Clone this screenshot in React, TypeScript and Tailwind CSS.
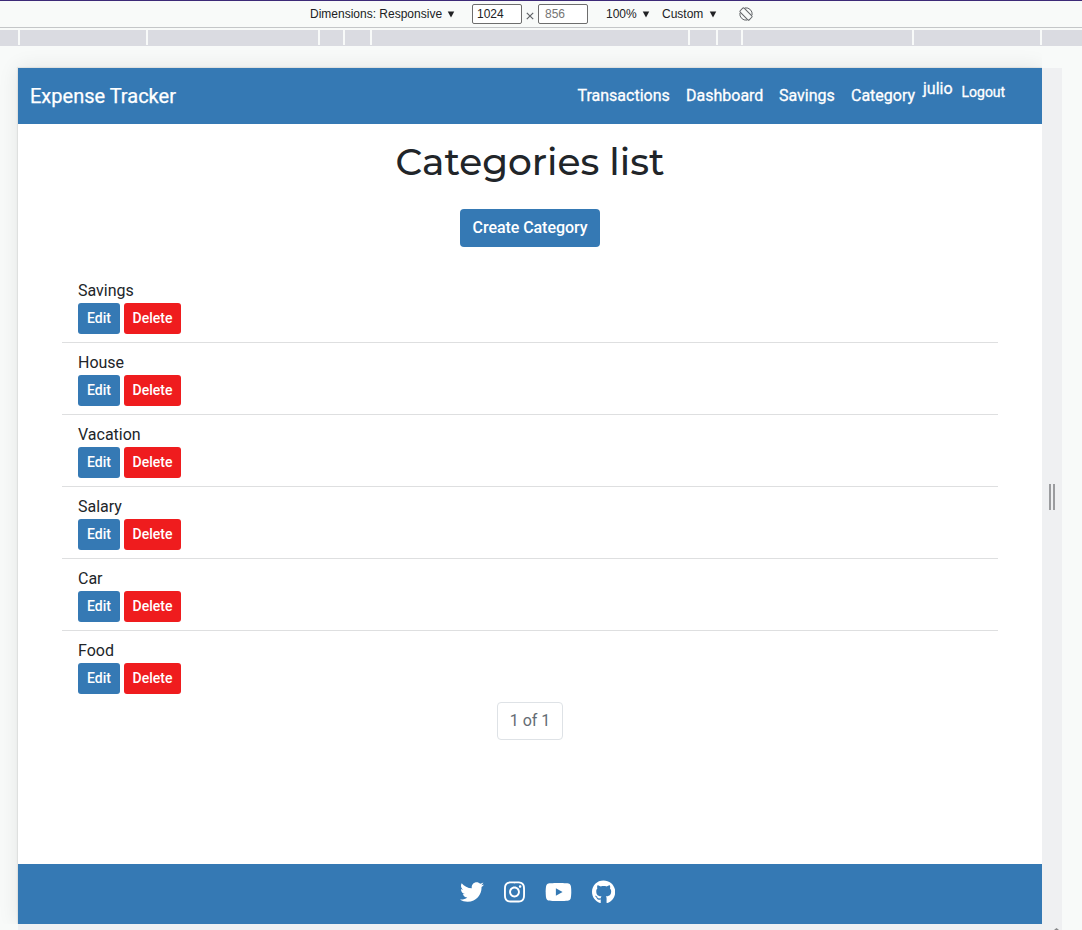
import { FaTwitter, FaInstagram, FaYoutube, FaGithub } from "react-icons/fa";

const categories = ["Savings", "House", "Vacation", "Salary", "Car", "Food"];

function DeviceToolbar() {
  return (
    <div className="flex h-7 shrink-0 items-center border-t border-b border-t-[#3d2a78] border-b-[#c4c6c8] bg-[#f8faf9] pl-[310px] font-['Liberation_Sans',Arial,sans-serif] text-[12px] leading-[14px] text-[#202124]">
      <span className="w-[134px] whitespace-nowrap">Dimensions: Responsive</span>
      <Caret />
      <span className="ml-[17px] flex h-5 w-[50px] items-center rounded-[2px] border border-[#6d6d6d] bg-white pl-1">1024</span>
      <svg viewBox="0 0 8 8" className="mx-1 mt-1 size-2 stroke-[#606367]" strokeWidth="1.2"><path d="M.8.8l6.4 6.4M7.2.8L.8 7.2" /></svg>
      <span className="flex h-5 w-[50px] items-center rounded-[2px] border border-[#6d6d6d] bg-white pl-1.5 text-[#757575]">856</span>
      <span className="ml-[18px] w-[33px]">100%</span>
      <Caret />
      <span className="ml-[12px] w-[44px]">Custom</span>
      <Caret />
      <svg viewBox="0 0 16 16" className="ml-[21px] size-4 fill-none stroke-[#606367]" strokeWidth="1">
        <rect x="5.2" y="1.6" width="5.6" height="12.8" rx="1" transform="rotate(-45 8 8)" />
        <path d="M7 1.9A6.2 6.2 0 0 1 14.1 9M9 14.1A6.2 6.2 0 0 1 1.9 7" />
      </svg>
    </div>
  );
}

function Caret() {
  return <svg viewBox="0 0 8 8" className="ml-[3px] h-[7px] w-[8px] fill-[#202124]"><path d="M.3.5h7.4L4 7.5z" /></svg>;
}

function Ruler() {
  return (
    <div className="mt-0.5 grid h-4 shrink-0 grid-cols-[18px_126px_170px_23px_25px_316px_26px_23px_169px_126px_1fr] gap-x-[2px] border-b border-[#dadbe1] bg-[#f8faf9]">
      {Array.from({ length: 11 }, (_, i) => <span key={i} className="bg-[#dadbe1]" />)}
    </div>
  );
}

function Navbar() {
  return (
    <nav className="flex h-14 shrink-0 bg-[#3579b4] px-3 text-white">
      <a className="mt-[13px] text-[20px] leading-[30px] [-webkit-text-stroke:0.25px_white]">Expense Tracker</a>
      <div className="mr-[24.5px] ml-auto flex text-[16px] leading-6 [-webkit-text-stroke:0.3px_white]">
        <a className="mt-[15.5px] w-[108.5px]">Transactions</a>
        <a className="mt-[15.5px] w-[93px]">Dashboard</a>
        <a className="mt-[15.5px] w-[72px]">Savings</a>
        <a className="mt-[15.5px] w-[72px]">Category</a>
        <span className="mt-[8.5px] w-[38.5px]">julio</span>
        <a className="mt-[13.5px] w-[44px] text-[14px] leading-[21px]">Logout</a>
      </div>
    </nav>
  );
}

function CategoryRow({ name }: { name: string }) {
  return (
    <li className="h-[72px] border-b border-[#dedfe0] px-4 pt-2 last:border-b-0">
      <p className="text-[16px] leading-6">{name}</p>
      <div className="flex gap-1 text-[14px] leading-[21px] font-medium text-white">
        <button className="h-[31px] w-[42px] rounded-[3px] bg-[#3579b4]">Edit</button>
        <button className="h-[31px] w-[57px] rounded-[3px] bg-[#ef1c1e]">Delete</button>
      </div>
    </li>
  );
}

export default function App() {
  return (
    <div className="flex h-[930px] w-[1082px] flex-col overflow-hidden bg-[#f8faf9] font-[Roboto,sans-serif] text-[#212529]">
      <DeviceToolbar />
      <Ruler />
      <div className="mt-[22px] ml-[18px] grid w-[1044px] grid-cols-[1024px_20px] grid-rows-[856px_6px] bg-[#eff0f2]">
        <div className="flex flex-col bg-white shadow-[0_0_20px_rgba(0,0,0,0.09),0_0_1px_1px_rgba(0,0,0,0.06)] [clip-path:inset(-22px_0_0_-18px)]">
          <Navbar />
          <main className="flex grow flex-col items-center">
            <h1 className="mt-[14px] font-[Montserrat,Lato,sans-serif] text-[37.5px] leading-[48px] font-medium whitespace-nowrap">Categories list</h1>
            <button className="mt-[23px] h-[38px] w-[140px] rounded-[4px] bg-[#3579b4] text-[16px] font-medium tracking-[-0.06px] text-white">Create Category</button>
            <ul className="mt-6 w-[936px]">
              {categories.map((name) => <CategoryRow key={name} name={name} />)}
            </ul>
            <span className="-mt-px flex h-[38px] w-[66px] items-center justify-center rounded-[4px] border border-[#dee2e6] text-[16px] text-[#646c74]">1 of 1</span>
          </main>
          <footer className="flex h-[60px] items-center bg-[#3579b4] pb-1 pl-[442px] text-white">
            <FaTwitter className="h-6 w-6" />
            <FaInstagram className="ml-5 h-6 w-[21px]" />
            <FaYoutube className="ml-5 h-6 w-[27px]" />
            <FaGithub className="ml-5 h-6 w-[23.25px]" />
          </footer>
        </div>
        <div className="flex items-start justify-center gap-[2px] pt-[416px]">
          <span className="h-[26px] w-[2px] bg-[#9b9c9f]" />
          <span className="h-[26px] w-[2px] bg-[#9b9c9f]" />
        </div>
        <div />
        <svg viewBox="0 0 20 6" className="h-1.5 w-5 fill-[#88898b]"><path d="M12 6l2.5-2 2.5 2z" /></svg>
      </div>
    </div>
  );
}
